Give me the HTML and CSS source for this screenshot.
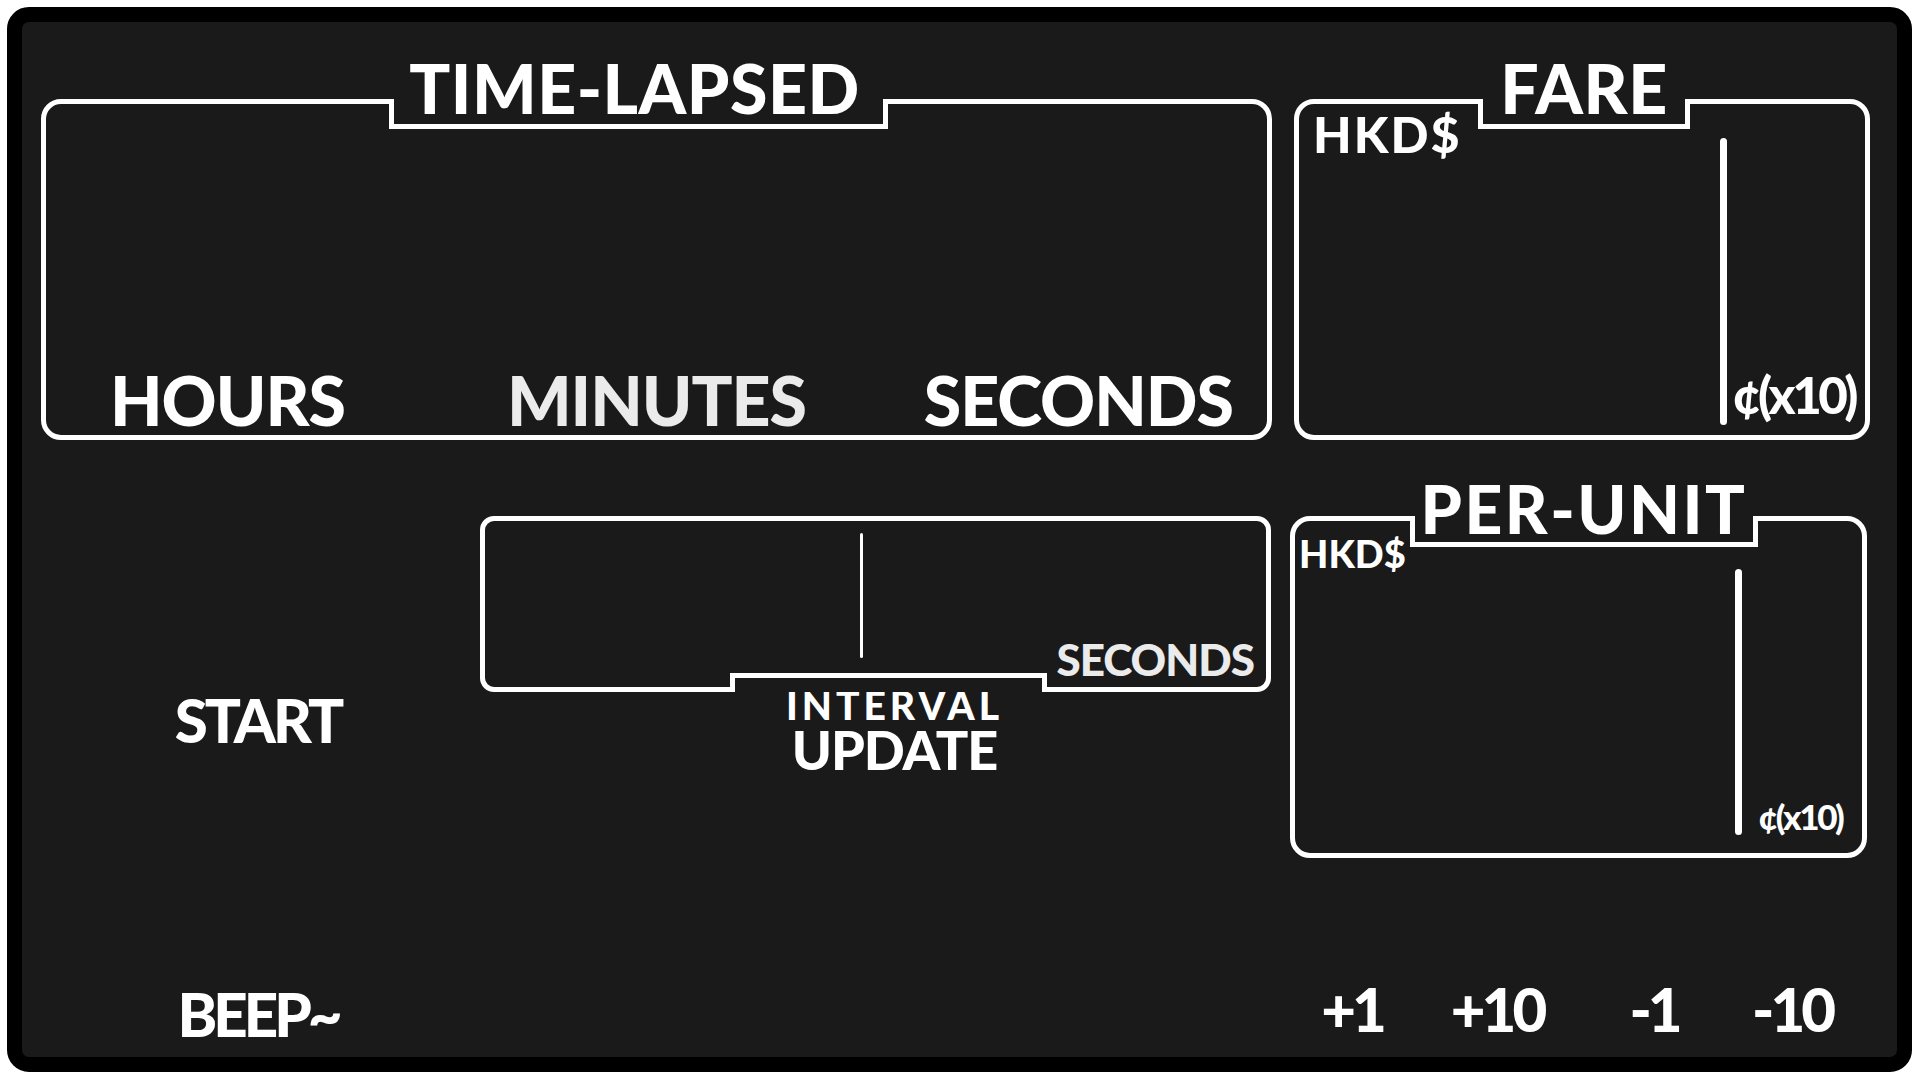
FILE: index.html
```html
<!DOCTYPE html>
<html lang="en">
<head>
    <meta charset="UTF-8">
    <title>Taxi Meter Panel</title>
    <link rel="stylesheet" href="styles.css">
</head>
<body>
    <div class="frame">
        <div class="top-row">
            <section class="panel panel-time">
                <div class="tab tab-top"><span class="title">TIME-LAPSED</span></div>
                <div class="time-units">
                    <span class="unit-hours">HOURS</span>
                    <span class="unit-minutes">MINUTES</span>
                    <span class="unit-seconds">SECONDS</span>
                </div>
            </section>
            <section class="panel panel-fare">
                <div class="tab tab-top"><span class="title">FARE</span></div>
                <div class="dollars"><span class="currency">HKD$</span></div>
                <div class="rule"></div>
                <div class="cents">¢(x10)</div>
            </section>
        </div>

        <div class="bottom-row">
            <div class="side-buttons">
                <div class="start">START</div>
                <div class="beep">BEEP~</div>
            </div>

            <div class="interval">
                <section class="panel panel-interval">
                    <div class="interval-value"></div>
                    <div class="rule thin"></div>
                    <div class="interval-unit">SECONDS</div>
                    <div class="tab tab-bottom"></div>
                </section>
                <div class="interval-label">
                    <span class="interval-small">INTERVAL</span>
                    <span class="interval-big">UPDATE</span>
                </div>
            </div>

            <div class="per-unit">
                <section class="panel panel-unit">
                    <div class="tab tab-top"><span class="title">PER-UNIT</span></div>
                    <div class="dollars"><span class="currency">HKD$</span></div>
                    <div class="rule"></div>
                    <div class="cents">¢(x10)</div>
                </section>
                <div class="steps">
                    <span>+1</span>
                    <span>+10</span>
                    <span>-1</span>
                    <span>-10</span>
                </div>
            </div>
        </div>
    </div>
</body>
</html>
```

FILE: styles.css
```css
body {
    margin: 0;
    background: #fff;
    font-family: Lato, "Open Sans", sans-serif;
    font-weight: 900;
    color: #fff;
}
.frame {
    box-sizing: border-box;
    width: 1905px;
    height: 1065px;
    margin: 7px;
    border: 15px solid #000;
    border-radius: 22px;
    background: #1a1a1a;
    overflow: hidden;
}
.panel {
    position: relative;
    box-sizing: border-box;
    border: 5px solid #fff;
    border-radius: 20px;
}
.tab {
    position: absolute;
    box-sizing: border-box;
    background: #1a1a1a;
    border: 5px solid #fff;
    display: flex;
    justify-content: center;
    align-items: flex-end;
}
.tab-top {
    top: -5px;
    height: 30px;
    border-top: none;
}
.tab-bottom {
    bottom: -5px;
    height: 19px;
    border-bottom: none;
}
.title {
    font-size: 68px;
    line-height: 1;
    letter-spacing: 0.5px;
    margin-bottom: 2px;
    white-space: nowrap;
}

/* top row */
.top-row {
    display: flex;
    gap: 22px;
    padding: 77px 0 0 19px;
}
.panel-time {
    width: 1231px;
    height: 341px;
    display: flex;
    flex-direction: column;
    justify-content: flex-end;
}
.panel-time .tab {
    left: 343px;
    width: 499px;
}
.panel-time .title {
    margin-right: 8px;
}
.time-units {
    display: grid;
    grid-template-columns: 1fr 1fr 1fr;
    font-size: 68px;
    line-height: 1;
    letter-spacing: -1px;
    padding-bottom: 1px;
}
.unit-hours {
    padding-left: 64px;
}
.unit-minutes {
    text-align: center;
    color: #ebebeb;
}
.unit-seconds {
    text-align: right;
    padding-right: 34px;
}

.panel-fare {
    width: 576px;
    height: 341px;
    display: flex;
}
.panel-fare .tab {
    left: 179px;
    width: 212px;
}
.dollars {
    flex: 1;
}
.currency {
    display: block;
    line-height: 1;
}
.panel-fare .currency {
    font-size: 50px;
    letter-spacing: 2px;
    padding: 5px 0 0 14px;
}
.rule {
    background: #fff;
    border-radius: 4px;
}
.panel-fare .rule {
    width: 7px;
    height: 287px;
    margin-top: 34px;
}
.cents {
    display: flex;
    align-items: flex-end;
    line-height: 1;
    letter-spacing: -0.07em;
}
.panel-fare .cents {
    width: 138px;
    box-sizing: border-box;
    font-size: 51px;
    padding: 0 0 15px 5px;
}

/* bottom row */
.bottom-row {
    display: flex;
    margin-top: 76px;
}
.side-buttons {
    width: 458px;
    padding-left: 14px;
    box-sizing: border-box;
    text-align: center;
    font-size: 60px;
    line-height: 1;
}
.start {
    margin-top: 174px;
    letter-spacing: -3px;
}
.beep {
    margin-top: 234px;
    letter-spacing: -4px;
}

.interval {
    width: 791px;
}
.panel-interval {
    height: 176px;
    display: flex;
    border-radius: 14px;
}
.interval-value {
    width: 375px;
}
.rule.thin {
    width: 3px;
    height: 125px;
    margin-top: 12px;
}
.interval-unit {
    flex: 1;
    align-self: flex-end;
    text-align: right;
    font-size: 44px;
    line-height: 1;
    letter-spacing: -1px;
    color: #ebebeb;
    padding: 0 12px 6px 0;
}
.panel-interval .tab {
    left: 245px;
    width: 317px;
}
.interval-label {
    width: 317px;
    margin-left: 250px;
    padding-left: 12px;
    box-sizing: border-box;
    display: flex;
    flex-direction: column;
    align-items: center;
}
.interval-small {
    font-size: 39px;
    line-height: 30px;
    letter-spacing: 4px;
    margin-top: -2px;
}
.interval-big {
    font-size: 54px;
    line-height: 42px;
    margin-top: 9px;
    letter-spacing: -1px;
}

.per-unit {
    width: 577px;
    margin-left: 19px;
}
.panel-unit {
    height: 342px;
    display: flex;
}
.panel-unit .tab {
    left: 115px;
    width: 348px;
    height: 31px;
}
.panel-unit .title {
    font-size: 66px;
    letter-spacing: 2.5px;
    margin-bottom: 0;
}
.panel-unit .currency {
    font-size: 38px;
    padding: 13px 0 0 4px;
}
.panel-unit .rule {
    width: 7px;
    height: 266px;
    margin-top: 48px;
}
.panel-unit .cents {
    width: 120px;
    box-sizing: border-box;
    font-size: 35px;
    padding: 0 0 19px 16px;
}
.steps {
    display: grid;
    grid-template-columns: 124px 166px 148px 128px;
    margin-top: 121px;
    font-size: 60px;
    line-height: 1;
    letter-spacing: -4px;
    text-align: center;
}
```
